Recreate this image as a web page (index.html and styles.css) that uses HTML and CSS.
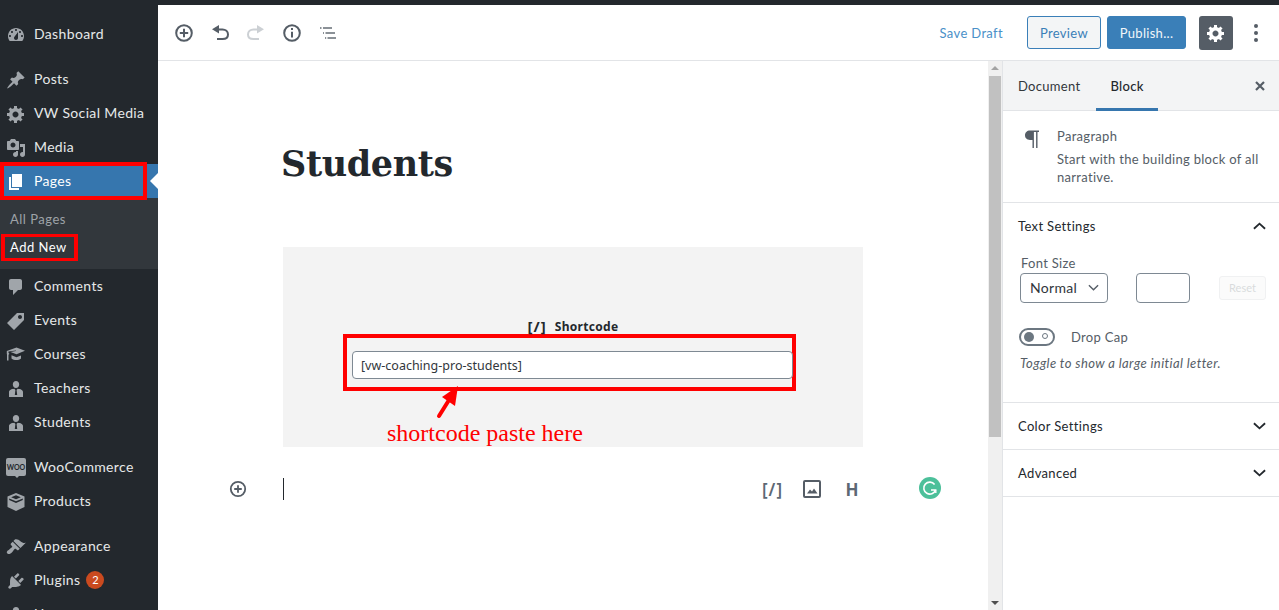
FILE: index.html
```html
<!DOCTYPE html>
<html lang="en">
<head>
    <meta charset="UTF-8" />
    <meta name="viewport" content="width=device-width, initial-scale=1.0" />
    <title>Edit Page</title>
    <link rel="stylesheet" href="styles.css">
</head>
<body>
    <div class="topbar"></div>
    <div class="layout">
        <nav class="adminmenu">
            <a class="menu-item"><svg viewBox="0 0 20 20"><path d="M3.76 16h12.48c1.1-1.37 1.76-3.11 1.76-5 0-4.42-3.58-8-8-8s-8 3.58-8 8c0 1.89.66 3.63 1.76 5zM10 4c.55 0 1 .45 1 1s-.45 1-1 1-1-.45-1-1 .45-1 1-1zM6 6c.55 0 1 .45 1 1s-.45 1-1 1-1-.45-1-1 .45-1 1-1zm8 0c.55 0 1 .45 1 1s-.45 1-1 1-1-.45-1-1 .45-1 1-1zm-5.37 5.55L12 7v6c0 1.1-.9 2-2 2s-2-.9-2-2c0-.57.24-1.08.63-1.45zM4 10c.55 0 1 .45 1 1s-.45 1-1 1-1-.45-1-1 .45-1 1-1zm12 0c.55 0 1 .45 1 1s-.45 1-1 1-1-.45-1-1 .45-1 1-1z"/></svg>Dashboard</a>
            <div class="menu-sep"></div>
            <a class="menu-item"><svg viewBox="0 0 20 20"><path d="M10.44 3.02l1.82-1.82 6.36 6.35-1.83 1.82c-1.05-.68-2.48-.57-3.41.36l-.75.75c-.92.93-1.04 2.35-.35 3.41l-1.83 1.82-2.41-2.41-2.8 2.79c-.42.42-3.38 2.71-3.8 2.29s1.86-3.39 2.28-3.81l2.79-2.79L4.1 9.36l1.83-1.82c1.05.69 2.48.57 3.4-.36l.75-.75c.93-.92 1.05-2.35.36-3.41z"/></svg>Posts</a>
            <a class="menu-item"><svg viewBox="0 0 20 20"><path d="M18 12h-2.18c-.17.7-.44 1.35-.81 1.93l1.54 1.54-2.1 2.1-1.54-1.54c-.58.36-1.23.63-1.91.79V19H8v-2.18c-.68-.16-1.33-.43-1.91-.79l-1.54 1.54-2.12-2.12 1.54-1.54c-.36-.58-.63-1.23-.79-1.91H1V9.03h2.17c.16-.7.44-1.35.8-1.94L2.43 5.55l2.1-2.1 1.54 1.54c.58-.37 1.24-.64 1.93-.81V2h3v2.18c.68.16 1.33.43 1.91.79l1.54-1.54 2.12 2.12-1.54 1.54c.36.59.64 1.24.8 1.94H18V12zm-8.5 1.5c1.66 0 3-1.34 3-3s-1.34-3-3-3-3 1.34-3 3 1.34 3 3 3z"/></svg>VW Social Media</a>
            <a class="menu-item"><svg viewBox="0 0 20 20"><path d="M13 11V4c0-.55-.45-1-1-1h-1.67L9 1H5L3.67 3H2c-.55 0-1 .45-1 1v7c0 .55.45 1 1 1h10c.55 0 1-.45 1-1zM7 4.5c1.38 0 2.5 1.12 2.5 2.5S8.38 9.5 7 9.5 4.5 8.38 4.5 7 5.62 4.5 7 4.5zM14 6h5v10.5c0 1.38-1.12 2.5-2.5 2.5S14 17.88 14 16.5s1.12-2.5 2.5-2.5c.17 0 .34.02.5.05V9h-3V6zm-4 8.05V13h2v3.5c0 1.38-1.12 2.5-2.5 2.5S7 17.88 7 16.5 8.12 14 9.5 14c.17 0 .34.02.5.05z"/></svg>Media</a>
            <a class="menu-item active"><svg viewBox="0 0 20 20"><path d="M6 15V2h10v13H6zm-1 1h8v2H3V5h2v11z"/></svg>Pages<span class="mark mark-pages"></span></a>
            <div class="submenu">
                <a class="sub-item">All Pages</a>
                <a class="sub-item current">Add New<span class="mark mark-new"></span></a>
            </div>
            <a class="menu-item"><svg viewBox="0 0 20 20"><path d="M5 2h9c1.1 0 2 .9 2 2v7c0 1.1-.9 2-2 2h-2l-5 5v-5H5c-1.1 0-2-.9-2-2V4c0-1.1.9-2 2-2z"/></svg>Comments</a>
            <a class="menu-item"><svg viewBox="0 0 20 20"><path d="M11 2h7v7L8 19l-7-7zm3 6c1.1 0 2-.9 2-2s-.9-2-2-2-2 .9-2 2 .9 2 2 2z"/></svg>Events</a>
            <a class="menu-item"><svg viewBox="0 0 20 20"><path d="M10.500 2.500l8.500 3.300-8.500 3.400-6-2.300 5.500-.9-.1-.6-7.400 1.200v1.500l.8.300-.3 1-.5.100v6h-1.500V9.300L.8 9V5.900zM5.500 10.300l5 2 4.500-1.800v3c-1.200 1-2.800 1.500-4.700 1.500-1.800 0-3.500-.5-4.800-1.500z"/></svg>Courses</a>
            <a class="menu-item"><svg viewBox="0 0 20 20"><path d="M10 2c1.900 0 3.200 1.500 3.200 3.400S11.900 9 10 9 6.800 7.300 6.800 5.400 8.100 2 10 2zM8.300 9.800L9.400 11l-.6 5h2.400l-.6-5 1.100-1.200c2.800.3 5.300 1.100 5.300 3.400V18H3v-4.800c0-2.300 2.500-3.100 5.300-3.400z"/></svg>Teachers</a>
            <a class="menu-item"><svg viewBox="0 0 20 20"><path d="M10 2c1.900 0 3.200 1.500 3.200 3.400S11.900 9 10 9 6.800 7.300 6.800 5.400 8.100 2 10 2zM8.300 9.800L9.400 11l-.6 5h2.400l-.6-5 1.100-1.200c2.800.3 5.300 1.100 5.300 3.400V18H3v-4.800c0-2.300 2.500-3.100 5.300-3.400z"/></svg>Students</a>
            <div class="menu-sep"></div>
            <a class="menu-item"><span class="woo-badge">Woo</span>WooCommerce</a>
            <a class="menu-item"><svg viewBox="0 0 20 20"><path d="M10 1l8.500 3.600v10.300L10 19l-8.500-4.100V4.600zM10 3.200L5.200 5.200l4.800 2.100 4.800-2.100zM3.200 6.400v1.700l6.800 3 6.800-3V6.400L10 9.300z" fill-rule="evenodd"/></svg>Products</a>
            <div class="menu-sep"></div>
            <a class="menu-item"><svg viewBox="0 0 20 20"><path d="M14.480 11.060L7.410 3.990l1.500-1.500c.5-.56 2.300-.47 3.510.32 1.210.8 1.430 1.280 2.910 2.100 1.180.64 2.450 1.260 4.450.85zM13.770 11.770L6.700 4.700 4.930 6.470c-.39.39-.39 1.020 0 1.410l1.060 1.060c.39.39.39 1.030 0 1.420-.6.6-1.430 1.110-2.210 1.690-.35.26-.7.53-1.010.84C1.430 13.230 0 15.100 1.430 16.530s3.300 0 4.640-1.340c.31-.31.58-.66.84-1.010.58-.78 1.090-1.610 1.690-2.210.39-.39 1.030-.39 1.420 0l1.060 1.060c.39.39 1.020.39 1.410 0z"/></svg>Appearance</a>
            <a class="menu-item"><svg viewBox="0 0 20 20"><path d="M13.110 4.360L9.870 7.600 8 5.730l3.240-3.240c.35-.34 1.050-.2 1.560.32.520.51.660 1.210.310 1.550zm-8 1.770l.91-1.120 9.010 9.010-1.190.84c-.71.710-2.630 1.160-3.820 1.160H6.140L4.900 17.260c-.59.590-1.540.59-2.120 0-.59-.58-.59-1.530 0-2.120l1.240-1.240v-3.880c0-1.130.4-3.180 1.090-3.890zm7.260 3.970l3.240-3.240c.34-.35 1.040-.21 1.550.31.520.51.660 1.210.310 1.550l-3.240 3.250z"/></svg>Plugins<span class="update-count">2</span></a>
            <a class="menu-item"><svg viewBox="0 0 20 20"><path d="M10 2c1.900 0 3.200 1.500 3.200 3.400S11.900 9 10 9 6.800 7.300 6.800 5.400 8.100 2 10 2zM3 18v-4.800C3 10.900 6 10 10 10s7 .9 7 3.200V18z"/></svg>Users</a>
        </nav>

        <div class="main">
            <header class="toolbar">
                <div class="tool-left">
                    <svg class="tool-icon" viewBox="0 0 20 20"><circle cx="10" cy="10" r="7.800"/><path d="M10 5.800v8.400M5.800 10h8.400"/></svg>
                    <svg class="tool-icon" viewBox="0 0 20 20"><path d="M8 6.500h4.500c3 0 5.500 2 5.500 5s-2.500 4.500-5.500 4.500H7"/><path class="solid" d="M2 6.300L9 2v8.600z"/></svg>
                    <svg class="tool-icon off" viewBox="0 0 20 20"><path d="M12 6.500H7.500c-3 0-5.500 2-5.500 5S4.500 16 7.500 16H13"/><path class="solid" d="M18 6.300L11 2v8.600z"/></svg>
                    <svg class="tool-icon" viewBox="0 0 20 20"><circle cx="10" cy="10" r="7.800"/><path d="M10 8.700v5.800" stroke-width="2"/><path d="M10 5v2" stroke-width="2"/></svg>
                    <svg class="tool-icon thin" viewBox="0 0 20 20"><path d="M2 5h1.500M5 5h9M5 10h1M7.500 10H17M7 15h1.200M9.500 15H18"/></svg>
                </div>
                <div class="tool-right">
                    <a class="save-draft">Save Draft</a>
                    <button class="btn btn-preview">Preview</button>
                    <button class="btn btn-publish">Publish...</button>
                    <button class="btn-gear"><svg viewBox="0 0 20 20"><path d="M18 12h-2.180c-.170.700-.440 1.350-.810 1.930l1.540 1.540-2.100 2.100-1.540-1.540c-.580.360-1.230.630-1.910.790V19H8v-2.180c-.680-.160-1.330-.430-1.910-.790l-1.540 1.540-2.120-2.120 1.540-1.540c-.360-.580-.630-1.230-.790-1.910H1V9.030h2.170c.160-.700.440-1.350.800-1.940L2.430 5.550l2.100-2.100 1.540 1.540c.580-.370 1.240-.640 1.930-.810V2h3v2.180c.680.160 1.330.430 1.910.790l1.540-1.540 2.120 2.120-1.540 1.540c.360.590.640 1.240.800 1.940H18V12zm-8.500 1.500c1.660 0 3-1.340 3-3s-1.340-3-3-3-3 1.340-3 3 1.340 3 3 3z"/></svg></button>
                    <div class="dots"><i></i><i></i><i></i></div>
                </div>
            </header>

            <div class="workspace">
                <section class="editor">
                    <h1 class="post-title">Students</h1>
                    <div class="shortcode-block">
                        <div class="shortcode-label"><span class="sc-icon">[/]</span>Shortcode</div>
                        <div class="input-box">
                            <input class="shortcode-input" type="text" value="[vw-coaching-pro-students]" />
                        </div>
                        <svg class="red-arrow" viewBox="0 0 26 36"><path d="M5 31L15 15" stroke="#f00" stroke-width="4" stroke-linecap="round"/><path d="M24 1L8 12l13 9z" fill="#f00"/></svg>
                        <div class="paste-note">shortcode paste here</div>
                    </div>
                    <div class="insert-row">
                        <svg class="tool-icon small" viewBox="0 0 20 20"><circle cx="10" cy="10" r="8"/><path d="M10 5.800v8.400M5.800 10h8.400"/></svg>
                        <span class="caret"></span>
                        <div class="inserter-icons">
                            <span class="ins-sc">[/]</span>
                            <svg class="ins-image" viewBox="0 0 20 20"><rect x="2" y="2" width="16" height="16" rx="1" fill="none" stroke="#555d66" stroke-width="2"/><path d="M5 14.500l3-4 2 2 2-3 3.500 5z" fill="#555d66"/></svg>
                            <span class="ins-h">H</span>
                        </div>
                        <svg class="grammarly" viewBox="0 0 22 22"><circle cx="11" cy="11" r="11" fill="#4cc09a"/><path d="M15.600 7.500A6 6 0 1 0 16.500 13H12" fill="none" stroke="#fff" stroke-width="1.600"/><path d="M16.800 13v3" stroke="#fff" stroke-width="1.400"/></svg>
                    </div>
                </section>

                <div class="scrollbar">
                    <span class="arrow-up"></span>
                    <div class="thumb"></div>
                    <span class="arrow-down"></span>
                </div>

                <aside class="settings">
                    <div class="tabs">
                        <a class="tab">Document</a>
                        <a class="tab selected">Block</a>
                        <svg class="close-x" viewBox="0 0 10 10"><path d="M1 1l8 8M9 1L1 9"/></svg>
                    </div>
                    <div class="block-card">
                        <span class="pilcrow"><svg viewBox="0 0 16 20"><path d="M15 1.500H6C3 1.500 1 3.600 1 6.300S3 11 6 11h2.500v8h1.400V3h2.200v16h1.400V3H15z"/></svg></span>
                        <div>
                            <div class="card-name">Paragraph</div>
                            <p class="card-desc">Start with the building block of all narrative.</p>
                        </div>
                    </div>
                    <div class="panel panel-open">
                        <div class="panel-head">Text Settings<svg class="chev up" viewBox="0 0 14 8"><path d="M1 7l6-5.500L13 7"/></svg></div>
                        <div class="field-label">Font Size</div>
                        <div class="font-row">
                            <div class="select">Normal<svg class="chev-sm" viewBox="0 0 12 7"><path d="M1 1l5 5 5-5"/></svg></div>
                            <div class="num-input"></div>
                            <div class="reset">Reset</div>
                        </div>
                        <div class="toggle-row">
                            <span class="toggle"><i class="knob"></i><i class="ring"></i></span>
                            <span class="toggle-label">Drop Cap</span>
                        </div>
                        <p class="help">Toggle to show a large initial letter.</p>
                    </div>
                    <div class="panel-head closed">Color Settings<svg class="chev" viewBox="0 0 14 8"><path d="M1 1l6 5.500L13 1"/></svg></div>
                    <div class="panel-head closed">Advanced<svg class="chev" viewBox="0 0 14 8"><path d="M1 1l6 5.500L13 1"/></svg></div>
                </aside>
            </div>
        </div>
    </div>
</body>
</html>
```

FILE: styles.css
```css
* {
    box-sizing: border-box;
}

html, body {
    height: 100%;
}

body {
    margin: 0;
    overflow: hidden;
    display: flex;
    flex-direction: column;
    background: #fff;
    color: #32373c;
    font-family: 'Lato', 'Open Sans', sans-serif;
    font-size: 13px;
}

.topbar {
    height: 5px;
    flex: none;
    background: #23282d;
}

.layout {
    flex: 1;
    display: flex;
    min-height: 0;
}

/* left admin menu */
.adminmenu {
    width: 158px;
    flex: none;
    padding-top: 12px;
    background: #23282d;
    overflow: hidden;
}

.menu-item {
    position: relative;
    height: 34px;
    display: flex;
    align-items: center;
    gap: 8px;
    padding-left: 6px;
    padding-bottom: 2px;
    color: #e6e8e9;
    font-size: 14px;
    letter-spacing: .35px;
}

.menu-item svg {
    width: 20px;
    height: 20px;
    flex: none;
    margin-top: 4px;
    fill: #a0a5aa;
}

.menu-sep {
    height: 11px;
}

.menu-item.active {
    background: #3676ae;
    color: #fff;
}

.menu-item.active svg {
    fill: #fff;
}

.menu-item.active::after {
    content: "";
    position: absolute;
    right: 0;
    top: 9px;
    border: 8px solid transparent;
    border-right-color: #fff;
}

.submenu {
    height: 71px;
    padding-top: 7px;
    background: #32373c;
}

.sub-item {
    position: relative;
    height: 28px;
    display: flex;
    align-items: center;
    padding-left: 10px;
    color: #9ea3a8;
    font-size: 13px;
    letter-spacing: .5px;
}

.sub-item.current {
    color: #fff;
}

/* red marks drawn over the menu */
.mark {
    position: absolute;
    border: 4px solid #f00;
}

.mark-pages {
    left: 0;
    top: -2px;
    width: 147px;
    height: 38px;
}

.mark-new {
    left: 1px;
    top: 1px;
    width: 77px;
    height: 27px;
    border-width: 3px 4px;
}

.woo-badge {
    position: relative;
    width: 20px;
    height: 18px;
    flex: none;
    margin-top: 2px;
    border-radius: 2px;
    background: #a0a5aa;
    color: #23282d;
    font-size: 7px;
    font-weight: 700;
    letter-spacing: 0;
    line-height: 18px;
    text-align: center;
    text-transform: uppercase;
}

.woo-badge::after {
    content: "";
    position: absolute;
    left: 9px;
    top: 18px;
    border: 2px solid transparent;
    border-top-color: #a0a5aa;
}

.update-count {
    width: 18px;
    height: 18px;
    margin-top: 2px;
    margin-left: -2px;
    border-radius: 50%;
    background: #ca4a1f;
    color: #fff;
    font-size: 11px;
    letter-spacing: 0;
    line-height: 18px;
    text-align: center;
}

/* top toolbar */
.main {
    flex: 1;
    min-width: 0;
    display: flex;
    flex-direction: column;
}

.toolbar {
    height: 56px;
    flex: none;
    display: flex;
    justify-content: space-between;
    align-items: center;
    padding: 0 14px 0 16px;
    border-bottom: 1px solid #e2e4e7;
}

.tool-left {
    display: flex;
    gap: 16px;
}

.tool-icon {
    width: 20px;
    height: 20px;
    fill: none;
    stroke: #555d66;
    stroke-width: 2;
}

.tool-icon .solid {
    fill: #555d66;
    stroke: none;
}

.tool-icon.off {
    stroke: #ccd0d4;
}

.tool-icon.off .solid {
    fill: #ccd0d4;
}

.tool-icon.thin {
    stroke: #666d75;
    stroke-width: 1.500;
}

.tool-right {
    display: flex;
    align-items: center;
}

.save-draft {
    margin-right: 24px;
    color: #4a90c8;
    letter-spacing: .35px;
}

.btn {
    height: 33px;
    border-radius: 3px;
    font-family: inherit;
    font-size: 13px;
    letter-spacing: .3px;
}

.btn-preview {
    width: 74px;
    margin-right: 6px;
    border: 1px solid #3a7fb8;
    background: #f3f5f6;
    color: #3a7fb8;
}

.btn-publish {
    width: 79px;
    margin-right: 13px;
    border: 1px solid #3a7fb8;
    background: #3a7fb8;
    color: #f1f6fa;
}

.btn-gear {
    width: 34px;
    height: 34px;
    padding: 7px;
    border: none;
    border-radius: 3px;
    background: #555d66;
}

.btn-gear svg {
    display: block;
    width: 20px;
    height: 20px;
    fill: #fff;
}

.dots {
    width: 18px;
    margin-left: 14px;
    display: flex;
    flex-direction: column;
    align-items: center;
    gap: 3px;
}

.dots i {
    width: 4px;
    height: 4px;
    border-radius: 50%;
    background: #555d66;
}

/* editor body */
.workspace {
    flex: 1;
    min-height: 0;
    display: flex;
}

.editor {
    width: 830px;
    flex: none;
    padding: 0 0 0 71px;
}

.post-title {
    margin: 77px 0 0 52px;
    color: #23282d;
    font-family: 'DejaVu Serif', serif;
    font-size: 35px;
    font-weight: 700;
    line-height: 52px;
    letter-spacing: -.4px;
}

.shortcode-block {
    position: relative;
    width: 580px;
    height: 200px;
    margin: 57px 0 0 54px;
    padding: 71px 0 0 60px;
    background: #f3f3f3;
}

.shortcode-label {
    display: flex;
    justify-content: center;
    align-items: center;
    gap: 8px;
    width: 460px;
    height: 16px;
    color: #23282d;
    font-family: 'Noto Sans', sans-serif;
    font-size: 12px;
    font-weight: 700;
    letter-spacing: .3px;
}

.sc-icon {
    font-size: 15px;
    letter-spacing: 1px;
}

.input-box {
    width: 453px;
    height: 57px;
    padding: 13px 0 0 5px;
    border: 4px solid #f00;
}

.shortcode-input {
    display: block;
    width: 441px;
    height: 28px;
    padding: 0 8px;
    border: 1px solid #7e8993;
    border-radius: 4px;
    background: #fff;
    color: #32373c;
    font-family: 'Noto Sans', sans-serif;
    font-size: 12.500px;
}

.red-arrow {
    position: absolute;
    left: 151px;
    top: 138px;
    width: 26px;
    height: 36px;
}

.paste-note {
    margin: 28px 0 0 44px;
    color: #f00;
    font-family: 'Liberation Serif', serif;
    font-size: 24px;
    line-height: 28px;
}

.insert-row {
    display: flex;
    align-items: center;
    height: 24px;
    margin-top: 30px;
}

.tool-icon.small {
    width: 18px;
    height: 18px;
    flex: none;
}

.caret {
    width: 1px;
    height: 22px;
    margin-left: 36px;
    background: #23282d;
}

.inserter-icons {
    margin-left: 478px;
    display: flex;
    align-items: center;
    gap: 20px;
    width: 100px;
    color: #5d6874;
}

.ins-sc {
    width: 20px;
    flex: none;
    font-family: 'Noto Sans', sans-serif;
    font-size: 17px;
    font-weight: 600;
    letter-spacing: 1px;
    text-align: center;
}

.ins-image {
    width: 20px;
    height: 20px;
    flex: none;
}

.ins-h {
    width: 20px;
    flex: none;
    font-family: 'Noto Sans', sans-serif;
    font-size: 17px;
    font-weight: 700;
    text-align: center;
}

.grammarly {
    width: 22px;
    height: 22px;
    margin-top: -2px;
    margin-left: 57px;
}

/* fake scrollbar */
.scrollbar {
    position: relative;
    width: 14px;
    flex: none;
    background: #f0f0f0;
}

.thumb {
    height: 361px;
    margin: 15px 1px 0;
    background: #c1c1c1;
}

.arrow-up, .arrow-down {
    position: absolute;
    left: 3px;
    border: 4px solid transparent;
}

.arrow-up {
    top: 1px;
    border-bottom-color: #a3a3a3;
}

.arrow-down {
    bottom: 1px;
    border-top-color: #505050;
}

/* right settings column */
.settings {
    flex: 1;
    min-width: 0;
    border-left: 1px solid #e2e4e7;
}

.tabs {
    height: 50px;
    display: flex;
    padding-left: 15px;
    gap: 30px;
    align-items: flex-start;
    background: #f3f4f5;
    border-bottom: 1px solid #e2e4e7;
    color: #32373c;
}

.tab {
    height: 49px;
    padding-top: 1px;
    line-height: 49px;
    letter-spacing: .3px;
}

.tab.selected {
    position: relative;
    font-weight: 500;
    color: #23282d;
}

.tab.selected::after {
    content: "";
    position: absolute;
    left: -14px;
    right: -14px;
    bottom: -1px;
    height: 3px;
    background: #3676ae;
}

.close-x {
    width: 10px;
    height: 10px;
    margin: 20px 14px 0 auto;
    fill: none;
    stroke: #555d66;
    stroke-width: 2.200;
}

.block-card {
    height: 92px;
    display: flex;
    gap: 17px;
    padding: 16px 16px 0 21px;
    border-bottom: 1px solid #e2e4e7;
    color: #555d66;
}

.pilcrow svg {
    display: block;
    width: 16px;
    height: 20px;
    margin-top: 2px;
    fill: #555d66;
}

.card-name {
    letter-spacing: .3px;
    line-height: 18px;
}

.card-desc {
    margin: 5px 0 0;
    letter-spacing: .3px;
    line-height: 18px;
}

.panel {
    height: 200px;
    border-bottom: 1px solid #e2e4e7;
}

.panel-head {
    display: flex;
    justify-content: space-between;
    align-items: center;
    height: 47px;
    padding: 0 13px 2px 15px;
    color: #23282d;
    letter-spacing: .35px;
}

.panel-head.closed {
    padding-bottom: 0;
    border-bottom: 1px solid #e2e4e7;
}

.chev {
    width: 13px;
    height: 8px;
    fill: none;
    stroke: #23282d;
    stroke-width: 2;
}

.field-label {
    margin: 5px 0 0 18px;
    padding-top: 1px;
    color: #555d66;
    letter-spacing: .3px;
    line-height: 14px;
}

.font-row {
    display: flex;
    align-items: center;
    margin: 3px 0 0 17px;
}

.select {
    width: 88px;
    height: 30px;
    display: flex;
    align-items: center;
    justify-content: space-between;
    padding: 0 8px 2px 9px;
    border: 1px solid #7e8993;
    border-radius: 4px;
    color: #32373c;
    font-size: 14px;
    letter-spacing: .3px;
}

.chev-sm {
    width: 11px;
    height: 7px;
    fill: none;
    stroke: #555d66;
    stroke-width: 1.500;
}

.num-input {
    width: 54px;
    height: 30px;
    margin-left: 28px;
    border: 1px solid #7e8993;
    border-radius: 4px;
}

.reset {
    width: 47px;
    height: 24px;
    margin-left: 29px;
    border: 1px solid #f0f1f2;
    border-radius: 3px;
    background: #fbfbfb;
    color: #d9dbdd;
    font-size: 11px;
    line-height: 22px;
    text-align: center;
}

.toggle-row {
    display: flex;
    align-items: center;
    margin: 25px 0 0 16px;
}

.toggle {
    position: relative;
    width: 36px;
    height: 18px;
    border: 2px solid #6c7781;
    border-radius: 9px;
}

.knob {
    position: absolute;
    left: 3px;
    top: 2px;
    width: 10px;
    height: 10px;
    border-radius: 50%;
    background: #6c7781;
}

.ring {
    position: absolute;
    right: 5px;
    top: 3px;
    width: 6px;
    height: 6px;
    border: 1px solid #6c7781;
    border-radius: 50%;
}

.toggle-label {
    margin-left: 16px;
    color: #555d66;
    letter-spacing: .3px;
}

.help {
    margin: 9px 0 0 17px;
    color: #555d66;
    font-size: 13px;
    font-style: italic;
    letter-spacing: .4px;
}
```
